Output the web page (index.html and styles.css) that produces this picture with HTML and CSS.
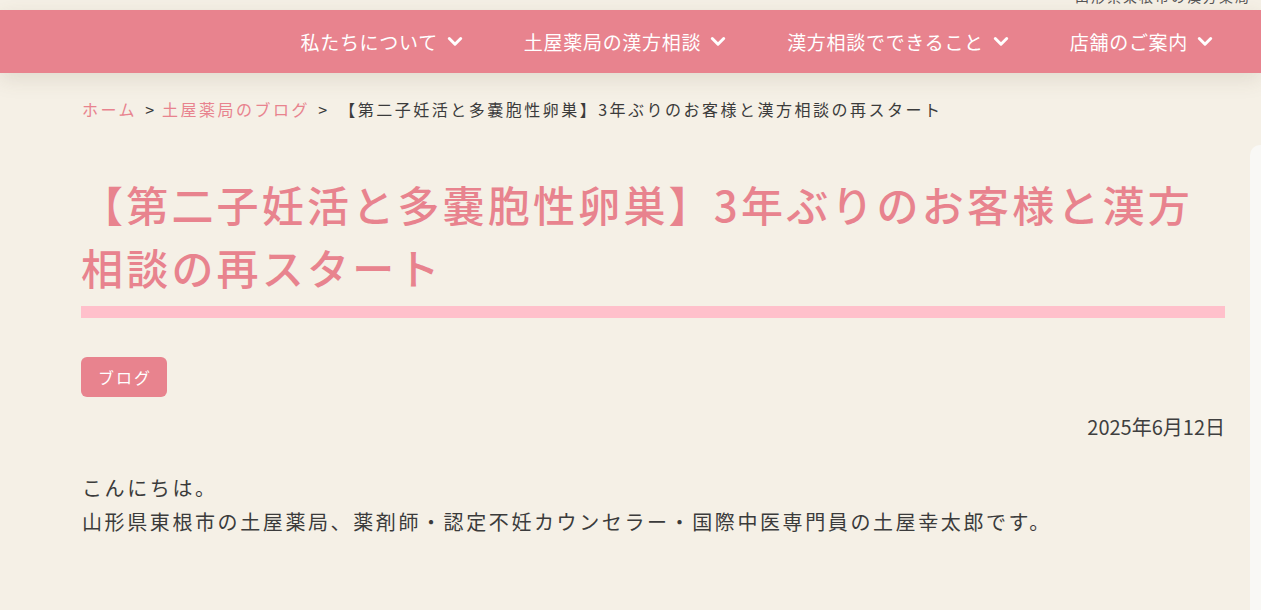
FILE: index.html
```
<!DOCTYPE html>
<html lang="ja">

<head>
   <meta charset="UTF-8">
   <meta name="viewport" content="width=device-width, initial-scale=1.0">
   <title>【第二子妊活と多嚢胞性卵巣】3年ぶりのお客様と漢方相談の再スタート | 土屋薬局</title>
   <link rel="stylesheet" href="styles.css">
</head>

<body>
   <div class="topbar">
      <span>山形県東根市の漢方薬局・土屋薬局</span>
   </div>

   <nav class="nav">
      <a class="nav-item" href="#">私たちについて
         <svg class="chev" viewBox="0 0 14 10"><polyline points="2,2 7,7 12,2" /></svg>
      </a>
      <a class="nav-item" href="#">土屋薬局の漢方相談
         <svg class="chev" viewBox="0 0 14 10"><polyline points="2,2 7,7 12,2" /></svg>
      </a>
      <a class="nav-item" href="#">漢方相談でできること
         <svg class="chev" viewBox="0 0 14 10"><polyline points="2,2 7,7 12,2" /></svg>
      </a>
      <a class="nav-item" href="#">店舗のご案内
         <svg class="chev" viewBox="0 0 14 10"><polyline points="2,2 7,7 12,2" /></svg>
      </a>
   </nav>

   <div class="breadcrumb">
      <a href="#">ホーム</a>
      <span class="sep">&gt;</span>
      <a href="#">土屋薬局のブログ</a>
      <span class="sep">&gt;</span>
      <span class="current">【第二子妊活と多嚢胞性卵巣】3年ぶりのお客様と漢方相談の再スタート</span>
   </div>

   <div class="layout">
      <main class="article">
         <h1 class="title">【第二子妊活と多嚢胞性卵巣】3年ぶりのお客様と漢方相談の再スタート</h1>

         <div class="tags">
            <a class="tag" href="#">ブログ</a>
         </div>

         <div class="date">2025年6月12日</div>

         <div class="body">
            <p>こんにちは。</p>
            <p>山形県東根市の土屋薬局、薬剤師・認定不妊カウンセラー・国際中医専門員の土屋幸太郎です。</p>
         </div>
      </main>

      <aside class="sidebar"></aside>
   </div>
</body>

</html>
```

FILE: styles.css
```
body {
   margin: 0;
   background-color: #f5f0e6;
   color: #3b3b3b;
   font-family: "Noto Sans CJK JP", "Noto Sans", sans-serif;
   overflow: hidden;
}

a {
   text-decoration: none;
}

/* strip above the menu, its text scrolled mostly out of view */
.topbar {
   height: 10px;
   overflow: hidden;
   display: flex;
   justify-content: flex-end;
   align-items: flex-end;
}

.topbar span {
   font-size: 14px;
   line-height: 14px;
   margin-bottom: 7px;
   margin-right: -70px;
   color: #555;
   letter-spacing: 2px;
   white-space: nowrap;
}

.nav {
   position: relative;
   z-index: 1;
   height: 63px;
   background-color: #e8838e;
   display: flex;
   justify-content: flex-end;
   align-items: center;
   gap: 61px;
   padding-right: 48px;
   box-shadow: 0 6px 20px rgba(90, 80, 50, 0.13);
}

.nav-item {
   color: #fff;
   font-size: 19px;
   letter-spacing: 0.7px;
   display: flex;
   align-items: center;
   gap: 9px;
}

.chev {
   width: 16px;
   height: 12px;
   fill: none;
   stroke: #fff;
   stroke-width: 2.6;
   stroke-linecap: round;
   stroke-linejoin: round;
}

.breadcrumb {
   padding: 22px 0 0 82px;
   font-size: 16px;
   line-height: 28px;
   letter-spacing: 2.5px;
   white-space: nowrap;
}

.breadcrumb a {
   color: #e8838e;
}

.breadcrumb .sep {
   margin: 0 2px;
   letter-spacing: 0;
}

.breadcrumb .current {
   margin-left: 4px;
}

.layout {
   display: flex;
   margin-top: 22px;
}

.article {
   flex-shrink: 0;
   width: 1144px;
   margin-left: 81px;
   padding-top: 27px;
}

.title {
   margin: 0;
   color: #e8838e;
   font-size: 42px;
   font-weight: 500;
   line-height: 63px;
   letter-spacing: 3.2px;
   padding-bottom: 8px;
   border-bottom: 12px solid #ffc0cb;
}

.tags {
   margin-top: 39px;
}

.tag {
   display: inline-block;
   background-color: #e8838e;
   color: #fff;
   font-size: 16px;
   letter-spacing: 2px;
   line-height: 40px;
   padding: 0 15px 0 17px;
   border-radius: 6px;
}

.date {
   margin-top: 15px;
   text-align: right;
   font-size: 20px;
   line-height: 30px;
   color: #3f3f3f;
}

.body {
   margin-top: 29px;
   font-size: 20px;
   letter-spacing: 2.6px;
   line-height: 34px;
}

.body p {
   margin: 0;
   padding-left: 1px;
}

.sidebar {
   flex-shrink: 0;
   width: 320px;
   height: 600px;
   margin-left: 25px;
   background-color: #f9f8f5;
   border-radius: 10px;
}
```
